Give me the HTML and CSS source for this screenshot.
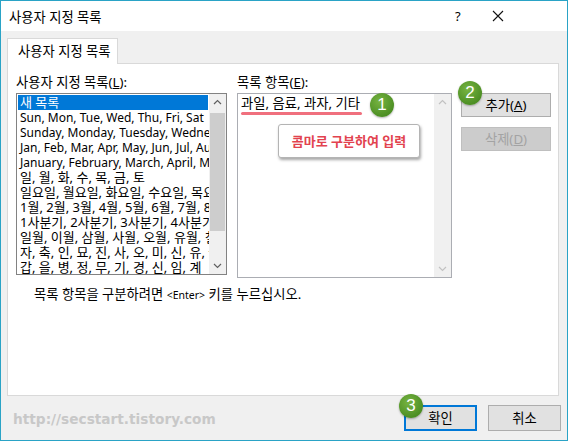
FILE: index.html
```html
<!DOCTYPE html>
<html lang="ko">
<head>
  <meta charset="UTF-8" />
  <title>사용자 지정 목록</title>
  <link rel="stylesheet" href="styles.css">
</head>
<body>
  <div class="window">
    <div class="titlebar">
      <div class="titulo">사용자 지정 목록</div>
      <div class="help">?</div>
      <div class="close">
        <svg width="12" height="12" viewBox="0 0 12 12"><path d="M1 1 L11 11 M11 1 L1 11" stroke="#111" stroke-width="1.1" fill="none"/></svg>
      </div>
    </div>

    <div class="content">
      <div class="tabs">
        <div class="tab">사용자 지정 목록</div>
      </div>
      <div class="panel">
        <div class="columns">
          <div class="col-left">
            <div class="label">사용자 지정 목록(<u>L</u>):</div>
            <div class="listbox">
              <div class="rows">
                <div class="row selected">새 목록</div>
                <div class="row latin">Sun, Mon, Tue, Wed, Thu, Fri, Sat</div>
                <div class="row latin">Sunday, Monday, Tuesday, Wednesday, Thursday, Friday, Saturday</div>
                <div class="row latin">Jan, Feb, Mar, Apr, May, Jun, Jul, Aug, Sep, Oct, Nov, Dec</div>
                <div class="row latin">January, February, March, April, May, June</div>
                <div class="row">일, 월, 화, 수, 목, 금, 토</div>
                <div class="row">일요일, 월요일, 화요일, 수요일, 목요일</div>
                <div class="row">1월, 2월, 3월, 4월, 5월, 6월, 7월, 8월</div>
                <div class="row">1사분기, 2사분기, 3사분기, 4사분기</div>
                <div class="row">일월, 이월, 삼월, 사월, 오월, 유월, 칠월</div>
                <div class="row">자, 축, 인, 묘, 진, 사, 오, 미, 신, 유, 술, 해</div>
                <div class="row">갑, 을, 병, 정, 무, 기, 경, 신, 임, 계</div>
              </div>
              <div class="scrollbar">
                <svg class="arrow" width="9" height="6" viewBox="0 0 9 6"><path d="M1 5 L4.5 1.5 L8 5" stroke="#606060" stroke-width="1.2" fill="none"/></svg>
                <div class="track"><div class="thumb"></div></div>
                <svg class="arrow" width="9" height="6" viewBox="0 0 9 6"><path d="M1 1 L4.5 4.5 L8 1" stroke="#606060" stroke-width="1.2" fill="none"/></svg>
              </div>
            </div>
          </div>

          <div class="col-right">
            <div class="label">목록 항목(<u>E</u>):</div>
            <div class="textbox">
              <div class="textbox-text">
                과일, 음료, 과자, 기타
                <span class="underline-mark"></span>
              </div>
              <div class="scrollbar light">
                <svg class="arrow" width="9" height="6" viewBox="0 0 9 6"><path d="M1 5 L4.5 1.5 L8 5" stroke="#c2c2c2" stroke-width="1.2" fill="none"/></svg>
                <div class="track"></div>
                <svg class="arrow" width="9" height="6" viewBox="0 0 9 6"><path d="M1 1 L4.5 4.5 L8 1" stroke="#c2c2c2" stroke-width="1.2" fill="none"/></svg>
              </div>
              <div class="badge badge-1">1</div>
              <div class="callout">콤마로 구분하여 입력</div>
            </div>
          </div>

          <div class="col-buttons">
            <div class="button">추가(<u>A</u>)<div class="badge badge-2">2</div></div>
            <div class="button disabled">삭제(<u>D</u>)</div>
          </div>
        </div>
        <div class="hint">목록 항목을 구분하려면 <span class="small">&lt;Enter&gt;</span> 키를 누르십시오.</div>
      </div>
    </div>

    <div class="footer">
      <div class="watermark">http://secstart.tistory.com</div>
      <div class="footer-buttons">
        <div class="button wide default">확인<div class="badge badge-3">3</div></div>
        <div class="button wide">취소</div>
      </div>
    </div>
  </div>
</body>
</html>
```

FILE: styles.css
```css
* {
  box-sizing: border-box;
}

body {
  margin: 0;
  font-family: "Noto Sans", "Noto Sans CJK KR", sans-serif;
  font-size: 13.3px;
  color: #000;
}

.window {
  width: 568px;
  height: 441px;
  border: 1px solid #2aa3c6;
  background-color: #f0f0f0;
  display: flex;
  flex-direction: column;
}

.titlebar {
  height: 30px;
  background-color: #fff;
  display: flex;
  align-items: center;
  padding-left: 8px;
}

.titulo {
  flex: 1;
}

.help {
  width: 20px;
  font-size: 13px;
  margin-right: 17px;
}

.close {
  width: 12px;
  height: 12px;
  margin-right: 63px;
  display: flex;
}

.content {
  padding: 7px 0 0 6px;
}

.tabs {
  display: flex;
  margin-bottom: -1px;
  position: relative;
}

.tab {
  width: 111px;
  height: 26px;
  background-color: #fff;
  border: 1px solid #d9d9d9;
  border-bottom: none;
  padding-left: 10px;
  line-height: 24px;
}

.panel {
  width: 552px;
  height: 333px;
  background-color: #fff;
  border: 1px solid #d9d9d9;
  padding: 10px 0 0 8px;
}

.columns {
  display: flex;
  align-items: flex-start;
}

.label {
  height: 16px;
  line-height: 16px;
  margin-bottom: 3px;
}

.col-left {
  width: 211px;
  margin-right: 10px;
}

.listbox {
  height: 182px;
  border: 1px solid #828282;
  display: flex;
  overflow: hidden;
}

.rows {
  flex: 1;
  overflow: hidden;
  padding: 1px 1px 0 1px;
}

.row {
  height: 15px;
  line-height: 15px;
  white-space: nowrap;
  padding-left: 2px;
  font-size: 13px;
}

.row.latin {
  font-size: 12px;
}

.row.selected {
  background-color: #0078d7;
  color: #fff;
}

.scrollbar {
  width: 17px;
  background-color: #f0f0f0;
  display: flex;
  flex-direction: column;
  align-items: center;
}

.scrollbar .arrow {
  margin: 5px 0;
}

.track {
  flex: 1;
  width: 100%;
  padding-top: 3px;
}

.thumb {
  height: 118px;
  margin: 0 1px;
  background-color: #cdcdcd;
}

.col-right {
  width: 215px;
  margin-right: 9px;
}

.textbox {
  height: 185px;
  border: 1px solid #abadb3;
  display: flex;
  position: relative;
}

.textbox-text {
  flex: 1;
  padding: 1px 3px;
  line-height: 16px;
  position: relative;
}

.underline-mark {
  position: absolute;
  left: 3px;
  top: 18px;
  width: 121px;
  height: 3px;
  border-radius: 2px;
  background-color: #f0707e;
}

.callout {
  position: absolute;
  left: 40px;
  top: 30px;
  width: 142px;
  height: 34px;
  background-color: #fff;
  border: 1px solid #b4b4b4;
  border-radius: 3px;
  box-shadow: 1px 2px 3px rgba(0, 0, 0, 0.35);
  color: #e2434f;
  font-weight: bold;
  font-size: 13px;
  text-align: center;
  line-height: 32px;
}

.badge {
  position: absolute;
  width: 24px;
  height: 24px;
  border-radius: 50%;
  background: radial-gradient(circle at 40% 35%, #77b442, #4d8f24 70%);
  color: #fff;
  font-size: 17px;
  line-height: 24px;
  text-align: center;
  box-shadow: 0 1px 2px rgba(0, 0, 0, 0.3);
  font-family: "Liberation Sans", sans-serif;
}

.badge-1 {
  left: 132px;
  top: -1px;
}

.badge-2 {
  left: -4px;
  top: -13px;
}

.badge-3 {
  left: -7px;
  top: -13px;
}

.col-buttons {
  width: 90px;
  padding-top: 19px;
  display: flex;
  flex-direction: column;
  gap: 10px;
}

.button {
  height: 24px;
  background-color: #e1e1e1;
  border: 1px solid #adadad;
  text-align: center;
  line-height: 22px;
  position: relative;
}

.button.disabled {
  background-color: #cccccc;
  border-color: #bfbfbf;
  color: #a3a3a3;
}

.hint {
  margin-top: 8px;
  padding-left: 18px;
  line-height: 16px;
}

.hint .small {
  font-size: 10.5px;
}

.footer {
  flex: 1;
  display: flex;
  align-items: flex-start;
  padding: 9px 6px 0 12px;
}

.watermark {
  flex: 1;
  margin-top: 6px;
  font-family: "DejaVu Sans", sans-serif;
  font-weight: bold;
  font-size: 13.7px;
  color: #c8c8c8;
}

.footer-buttons {
  display: flex;
  gap: 11px;
}

.button.wide {
  width: 73px;
  height: 26px;
  line-height: 24px;
}

.button.default {
  border: 2px solid #0078d7;
  line-height: 22px;
}
```
